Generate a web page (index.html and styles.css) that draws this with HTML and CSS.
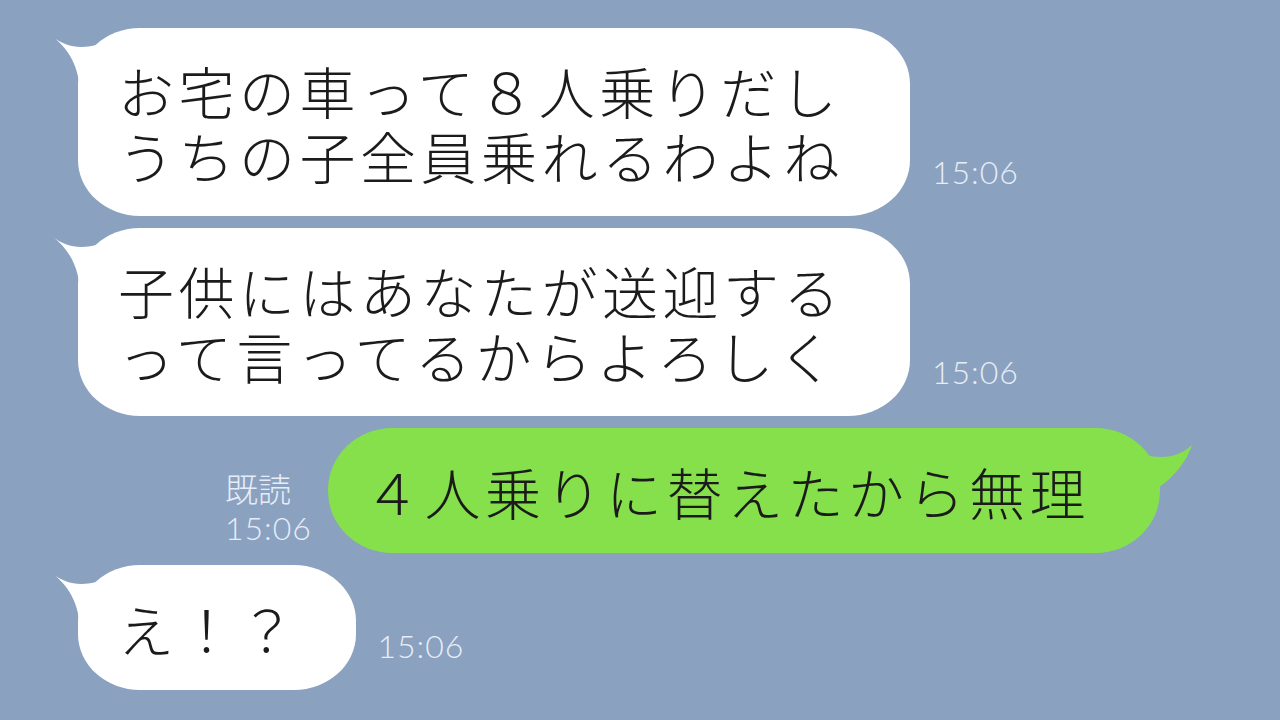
FILE: index.html
```html
<!DOCTYPE html>
<html lang="ja">
<head>
<meta charset="utf-8">
<link rel="stylesheet" href="styles.css">
</head>
<body>
<div class="chat">
  <div class="row left">
    <div class="bubble white">
      <svg class="tail tail-left" width="70" height="70" viewBox="0 0 70 70"><path d="M2,5 C22,22 46,18 72,2 L72,70 L30,70 C31,44 24,22 2,5 Z" fill="#fff"/></svg>
      <div class="text">お宅の車って８人乗りだし<br>うちの子全員乗れるわよね</div>
    </div>
    <div class="time">15:06</div>
  </div>
  <div class="row left">
    <div class="bubble white">
      <svg class="tail tail-left" width="70" height="70" viewBox="0 0 70 70"><path d="M2,5 C22,22 46,18 72,2 L72,70 L30,70 C31,44 24,22 2,5 Z" fill="#fff"/></svg>
      <div class="text">子供にはあなたが送迎する<br>って言ってるからよろしく</div>
    </div>
    <div class="time">15:06</div>
  </div>
  <div class="row right">
    <div class="status">
      <div class="read">既読</div>
      <div class="time-r">15:06</div>
    </div>
    <div class="bubble green">
      <svg class="tail tail-right" width="70" height="70" viewBox="0 0 70 70"><path d="M68,3 C50,20 26,18 -10,2 L-10,60 L10,60 C24,52 56,38 68,3 Z" fill="#86e04b"/></svg>
      <div class="text">４人乗りに替えたから無理</div>
    </div>
  </div>
  <div class="row left">
    <div class="bubble white small">
      <svg class="tail tail-left" width="70" height="70" viewBox="0 0 70 70"><path d="M2,5 C22,22 46,18 72,2 L72,70 L30,70 C31,44 24,22 2,5 Z" fill="#fff"/></svg>
      <div class="text">え！？</div>
    </div>
    <div class="time">15:06</div>
  </div>
</div>
</body>
</html>
```

FILE: styles.css
```css
html, body {
  margin: 0;
  padding: 0;
}
body {
  width: 1280px;
  height: 720px;
  background: #8aa1c0;
  overflow: hidden;
  font-family: "Noto Sans CJK JP", "Noto Sans", sans-serif;
}
.chat {
  display: flex;
  flex-direction: column;
  gap: 12px;
  padding-top: 28px;
}
.row {
  display: flex;
  align-items: flex-end;
}
.row.left {
  padding-left: 78px;
}
.row.right {
  padding-left: 225px;
}
.bubble {
  position: relative;
  border-radius: 62px / 56px;
  padding: 29px 66px 29px 40px;
}
.bubble.white {
  background: #ffffff;
}
.bubble.green {
  background: #86e04b;
  padding: 30px 70px 30px 36px;
  border-radius: 64px / 62px;
}
.bubble.small {
  padding: 30px 56px 30px 40px;
}
.text {
  position: relative;
  font-size: 56px;
  font-weight: 300;
  line-height: 65px;
  letter-spacing: 4.5px;
  color: #1b1b1b;
  white-space: nowrap;
}
.tail {
  position: absolute;
}
.tail-left {
  left: -28px;
  top: 3px;
}
.tail-right {
  right: -34px;
  top: 14px;
}
.time {
  margin-left: 22px;
  margin-bottom: 26px;
  font-family: "Lato", "Liberation Sans", sans-serif;
  font-weight: 300;
  font-size: 32px;
  letter-spacing: 1px;
  line-height: 36px;
  color: #e6edf7;
}
.status {
  display: flex;
  flex-direction: column;
  margin-right: 16px;
  margin-bottom: 5px;
  color: #e6edf7;
}
.read {
  font-family: "Noto Sans CJK JP", sans-serif;
  font-weight: 300;
  font-size: 33px;
  line-height: 40px;
}
.time-r {
  font-family: "Lato", "Liberation Sans", sans-serif;
  font-weight: 300;
  font-size: 32px;
  letter-spacing: 1px;
  line-height: 40px;
}
```
